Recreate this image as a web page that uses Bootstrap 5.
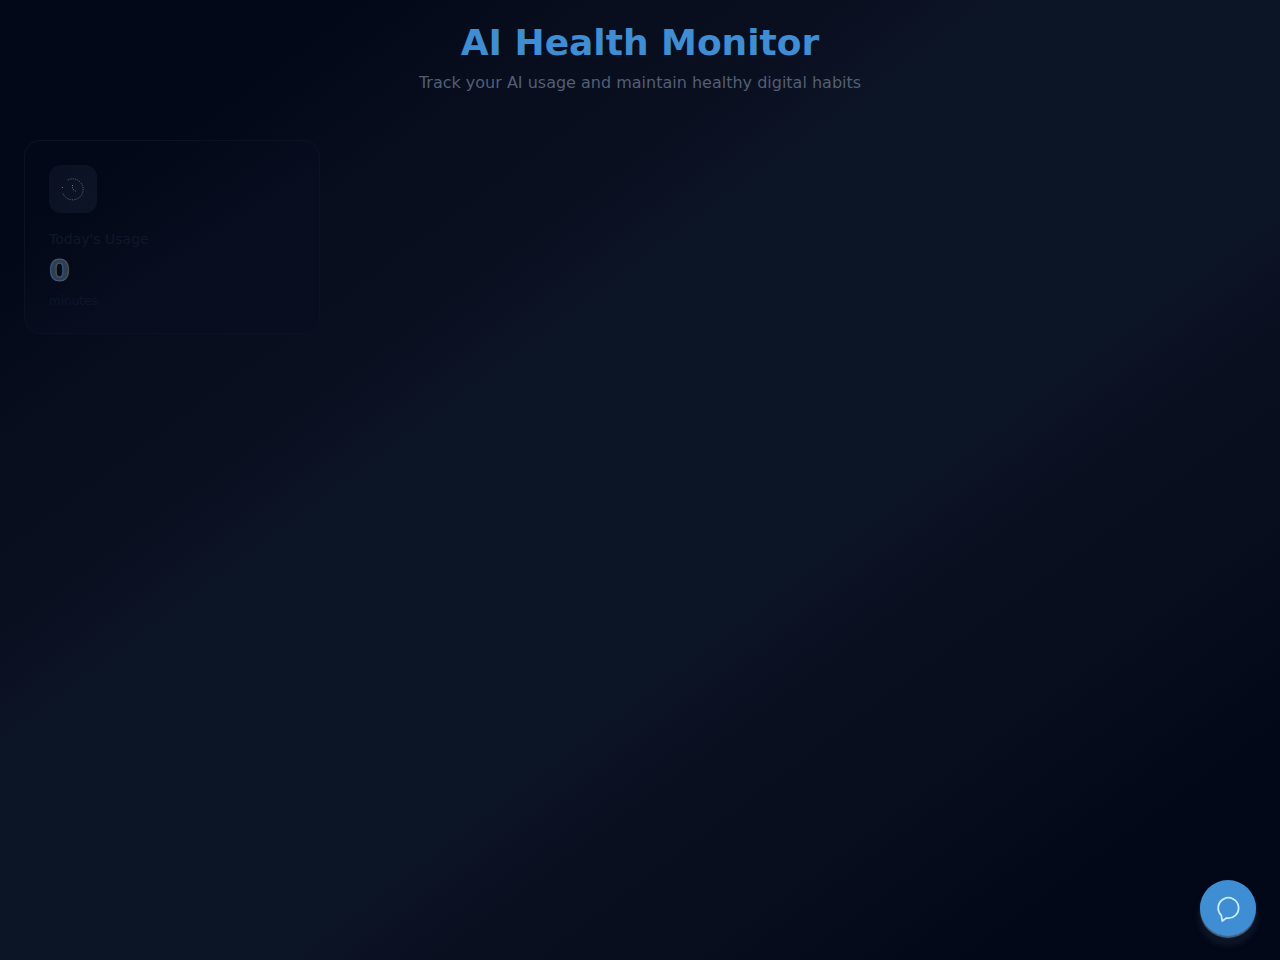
<!DOCTYPE html>
<html lang="en">
<head>
<meta charset="utf-8">
<meta name="viewport" content="width=device-width, initial-scale=1">
<title>AI Health Monitor</title>
<link href="https://cdn.jsdelivr.net/npm/bootstrap@5.3.0/dist/css/bootstrap.min.css" rel="stylesheet">
<style>
  body {
    font-family: "DejaVu Sans", sans-serif;
    color: #525f74;
    background: linear-gradient(to bottom right, #030818 0%, #030818 14%, #090e1f 24%, #0a0f20 33%, #0c1526 40%, #0c1526 60%, #0a0f20 67%, #090e1f 76%, #030818 88%, #030818 100%);
  }
  .page-head { margin-bottom: 44px; }
  .page-title { font-size: 36px; line-height: 38px; color: #3f8dd3; }
  .page-sub { font-size: 16px; line-height: 26px; }
  .stat-card {
    background: linear-gradient(to bottom right, #030818 20%, #080d1f 60%);
    border: 1px solid #0c1222;
    border-radius: 16px;
  }
  .stat-icon {
    width: 48px; height: 48px; border-radius: 12px;
    background: linear-gradient(to bottom right, #0a1022, #0c1526);
  }
  .stat-label { font-size: 14px; line-height: 20px; color: #0e1829; }
  .stat-value { font-size: 30px; line-height: 36px; color: #2f3e54; -webkit-text-stroke: 1px #4b5c73; paint-order: fill stroke; }
  .stat-unit { font-size: 12px; line-height: 16px; color: #0d1628; }
  .chat-btn {
    width: 56px; height: 56px;
    background: #3f8dd3; color: #c9ecfa;
    box-shadow: 0 2px 1px #4b6583, 0 8px 5px 2px #0c1526;
  }
  .chat-btn:hover { background: #3682c8; color: #fff; }
  .chat-btn svg { overflow: visible; }
</style>
</head>
<body class="min-vh-100">
<div class="container-fluid p-4">
  <header class="page-head text-center">
    <h1 class="page-title fw-bold mb-2">AI Health Monitor</h1>
    <p class="page-sub mb-0">Track your AI usage and maintain healthy digital habits</p>
  </header>
  <main class="row row-cols-1 row-cols-sm-2 row-cols-lg-4 g-3 mt-0">
    <div class="col mt-0">
      <section class="stat-card p-4">
        <div class="stat-icon d-flex align-items-center justify-content-center mb-3">
          <svg width="24" height="24" viewBox="0 0 24 24" fill="none" stroke="#66758a" aria-hidden="true">
            <path d="M1 10.500h1M2 16.500A10.500 10.500 0 1 0 6 3.500" stroke-dasharray="1 1.300"/>
            <path d="M11.500 8v4l3.500 2.500" stroke-dasharray="1 1.300"/>
          </svg>
        </div>
        <h2 class="stat-label mb-1">Today's Usage</h2>
        <div class="stat-value fw-bold mb-1">0</div>
        <div class="stat-unit">minutes</div>
      </section>
    </div>
  </main>
</div>
<button type="button" class="chat-btn btn rounded-circle border-0 p-0 position-fixed bottom-0 end-0 m-4 d-flex align-items-center justify-content-center" aria-label="Open chat">
  <svg width="24" height="24" viewBox="0 0 24 24" fill="none" stroke="currentColor" stroke-width="1.800" stroke-linejoin="round" aria-hidden="true">
    <path d="M5.200 19.200L6.300 25L10.500 22A10.200 10.200 0 1 0 5.200 19.200Z"/>
  </svg>
</button>
<script src="https://cdn.jsdelivr.net/npm/bootstrap@5.3.0/dist/js/bootstrap.bundle.min.js"></script>
</body>
</html>
